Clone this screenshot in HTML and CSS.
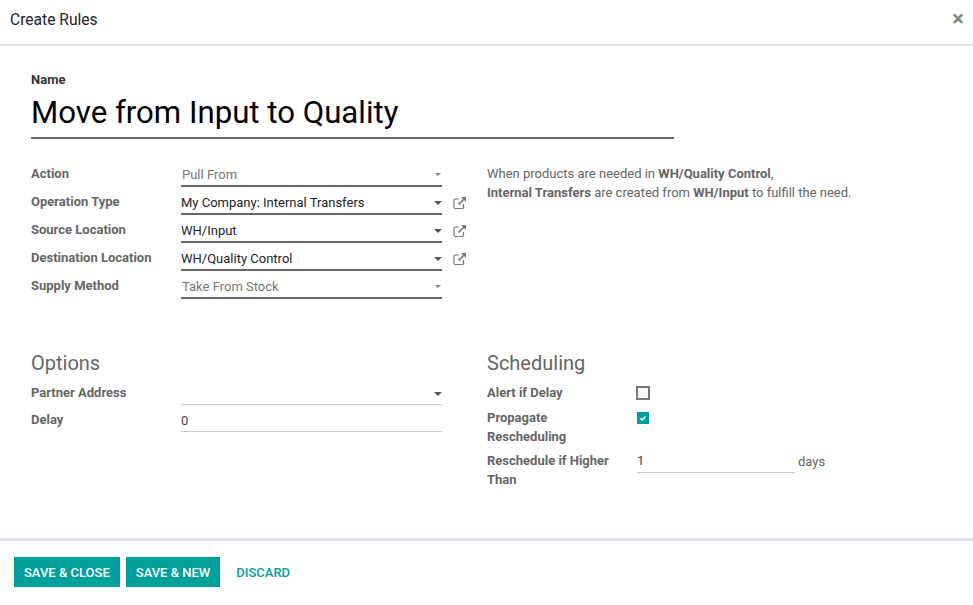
FILE: index.html
```html
<!DOCTYPE html>
<html lang="en">
<head>
  <meta charset="UTF-8" />
  <title>Create Rules</title>
  <link rel="stylesheet" href="styles.css">
</head>
<body>
  <header class="modal-header">
    <h4>Create Rules</h4>
    <span class="close">×</span>
  </header>

  <main class="sheet">
    <div class="title-label">Name</div>
    <div class="title-field">Move from Input to Quality</div>

    <div class="top-group">
      <div class="rule-fields">
        <div class="row">
          <label>Action</label>
          <div class="field select muted"><span>Pull From</span><i class="caret small"></i></div>
        </div>
        <div class="row">
          <label>Operation Type</label>
          <div class="field select"><span>My Company: Internal Transfers</span><i class="caret"></i></div>
          <svg class="ext" viewBox="0 0 14 14"><path d="M10.5 8v3a1.5 1.5 0 0 1-1.5 1.5H2.5A1.5 1.5 0 0 1 1 11V4.5A1.5 1.5 0 0 1 2.5 3H6" /><path class="shaft" d="M5.5 8.5 11 3" /><path class="tip" d="M8 1h5v5z" /></svg>
        </div>
        <div class="row">
          <label>Source Location</label>
          <div class="field select"><span>WH/Input</span><i class="caret"></i></div>
          <svg class="ext" viewBox="0 0 14 14"><path d="M10.5 8v3a1.5 1.5 0 0 1-1.5 1.5H2.5A1.5 1.5 0 0 1 1 11V4.5A1.5 1.5 0 0 1 2.5 3H6" /><path class="shaft" d="M5.5 8.5 11 3" /><path class="tip" d="M8 1h5v5z" /></svg>
        </div>
        <div class="row">
          <label>Destination Location</label>
          <div class="field select"><span>WH/Quality Control</span><i class="caret"></i></div>
          <svg class="ext" viewBox="0 0 14 14"><path d="M10.5 8v3a1.5 1.5 0 0 1-1.5 1.5H2.5A1.5 1.5 0 0 1 1 11V4.5A1.5 1.5 0 0 1 2.5 3H6" /><path class="shaft" d="M5.5 8.5 11 3" /><path class="tip" d="M8 1h5v5z" /></svg>
        </div>
        <div class="row">
          <label>Supply Method</label>
          <div class="field select muted"><span>Take From Stock</span><i class="caret small"></i></div>
        </div>
      </div>
      <p class="help">
        When products are needed in <b>WH/Quality Control</b>,<br />
        <b>Internal Transfers</b> are created from <b>WH/Input</b> to fulfill the need.
      </p>
    </div>

    <div class="bottom-group">
      <section class="options">
        <h2>Options</h2>
        <div class="row thin">
          <label>Partner Address</label>
          <div class="field select light"><span></span><i class="caret"></i></div>
        </div>
        <div class="row thin">
          <label>Delay</label>
          <div class="field light"><span>0</span></div>
        </div>
      </section>
      <section class="scheduling">
        <h2>Scheduling</h2>
        <div class="check-row">
          <label>Alert if Delay</label>
          <span class="checkbox"></span>
        </div>
        <div class="check-row tall">
          <label>Propagate Rescheduling</label>
          <span class="checkbox on">
            <svg viewBox="0 0 12 12"><path d="M3.5 6.3 5.2 8 8.5 4.5" /></svg>
          </span>
        </div>
        <div class="check-row high">
          <label>Reschedule if Higher Than</label>
          <div class="field light short"><span>1</span></div>
          <span class="unit">days</span>
        </div>
      </section>
    </div>
  </main>

  <footer class="modal-footer">
    <button class="primary">SAVE &amp; CLOSE</button>
    <button class="primary">SAVE &amp; NEW</button>
    <button class="link">DISCARD</button>
  </footer>
</body>
</html>
```

FILE: styles.css
```css
html, body {
  height: 100%;
}
body {
  margin: 0;
  background: #fff;
  color: #666;
  font-family: Roboto, "Noto Sans", sans-serif;
  font-size: 13px;
  display: flex;
  flex-direction: column;
}
.modal-header {
  height: 44px;
  flex: none;
  display: flex;
  align-items: center;
  justify-content: space-between;
  padding: 0 10px;
  border-bottom: 2px solid #dee2e6;
}
.modal-header h4 {
  margin: -4px 0 0;
  font-size: 15.6px;
  font-weight: 400;
  color: #212529;
}
.close {
  font-size: 22px;
  font-weight: 700;
  color: #888;
  line-height: 1;
  margin-top: -6px;
  margin-right: -1px;
}
.sheet {
  flex: 1;
  padding: 24px 31px 0;
}
.title-label {
  font-weight: 700;
  color: #333;
  line-height: 19px;
}
.title-field {
  width: 643px;
  height: 48px;
  line-height: 47px;
  font-size: 31.2px;
  color: #000;
  border-bottom: 2px solid #666;
}
.top-group {
  display: flex;
  margin-top: 20px;
  height: 190px;
}
.rule-fields {
  width: 456px;
  flex: none;
}
.row {
  display: flex;
  height: 28px;
}
.row label, .check-row label {
  width: 150px;
  flex: none;
  font-weight: 700;
  line-height: 19px;
  padding-top: 5px;
  box-sizing: border-box;
}
.field {
  width: 261px;
  height: 28px;
  box-sizing: border-box;
  border-bottom: 2px solid #666;
  display: flex;
  align-items: flex-end;
  justify-content: space-between;
  color: #212529;
  line-height: 19px;
  padding-bottom: 1px;
}
.field.muted {
  color: #777;
}
.field.muted span {
  padding-left: 1px;
}
.field.light {
  height: 27px;
  border-bottom: 1px solid #ccc;
  color: #444;
}
.field.short {
  width: 158px;
}
.caret {
  width: 0;
  height: 0;
  margin: 0 0 7px;
  border-left: 4px solid transparent;
  border-right: 4px solid transparent;
  border-top: 4px solid #555;
}
.caret.small {
  border-left-width: 3px;
  border-right-width: 3px;
  border-top-width: 3px;
  border-top-color: #888;
  margin-right: 1px;
  margin-bottom: 8px;
}
.ext {
  width: 14px;
  height: 14px;
  margin: 9px 0 0 11px;
  fill: none;
  stroke: #777;
  stroke-width: 1.2;
}
.ext .shaft {
  stroke-width: 1.7;
}
.ext .tip {
  fill: #777;
  stroke: none;
}
.help {
  margin: 5px 0 0;
  line-height: 19px;
}
.bottom-group {
  display: flex;
}
.bottom-group section {
  width: 456px;
  flex: none;
}
.bottom-group h2 {
  margin: 0 0 1px;
  font-size: 20px;
  font-weight: 400;
  line-height: 28px;
  color: #666;
}
.scheduling h2 {
  margin-bottom: 6px;
}
.row.thin {
  height: 27px;
}
.check-row {
  display: flex;
  min-height: 25px;
}
.check-row label {
  padding: 0 16px 0 0;
}
.checkbox {
  width: 14px;
  height: 14px;
  box-sizing: border-box;
  margin: 3px 0 0 -1px;
  border: 2px solid #777;
  background: #f8f8f8;
  flex: none;
}
.checkbox.on {
  width: 12px;
  height: 12px;
  border: none;
  background: #00a09d;
  margin: 4px 0 0;
}
.checkbox svg {
  display: block;
  fill: none;
  stroke: #fff;
  stroke-width: 1.8;
}
.check-row.tall {
  min-height: 38px;
  margin-bottom: 5px;
}
.high .field {
  height: 22px;
  padding-bottom: 2px;
}
.unit {
  margin: 1px 0 0 3px;
  line-height: 19px;
}
.modal-footer {
  flex: none;
  height: 67px;
  box-sizing: border-box;
  border-top: 3px solid #dee2e6;
  padding: 16px 14px 0;
  display: flex;
  align-items: flex-start;
  gap: 6px;
}
button {
  height: 30px;
  font-family: inherit;
  font-size: 13px;
  font-weight: 500;
  border: none;
  padding: 0 10px;
  cursor: pointer;
}
.primary {
  background: #00a09d;
  color: #fff;
}
.link {
  background: none;
  color: #00a09d;
}
```
